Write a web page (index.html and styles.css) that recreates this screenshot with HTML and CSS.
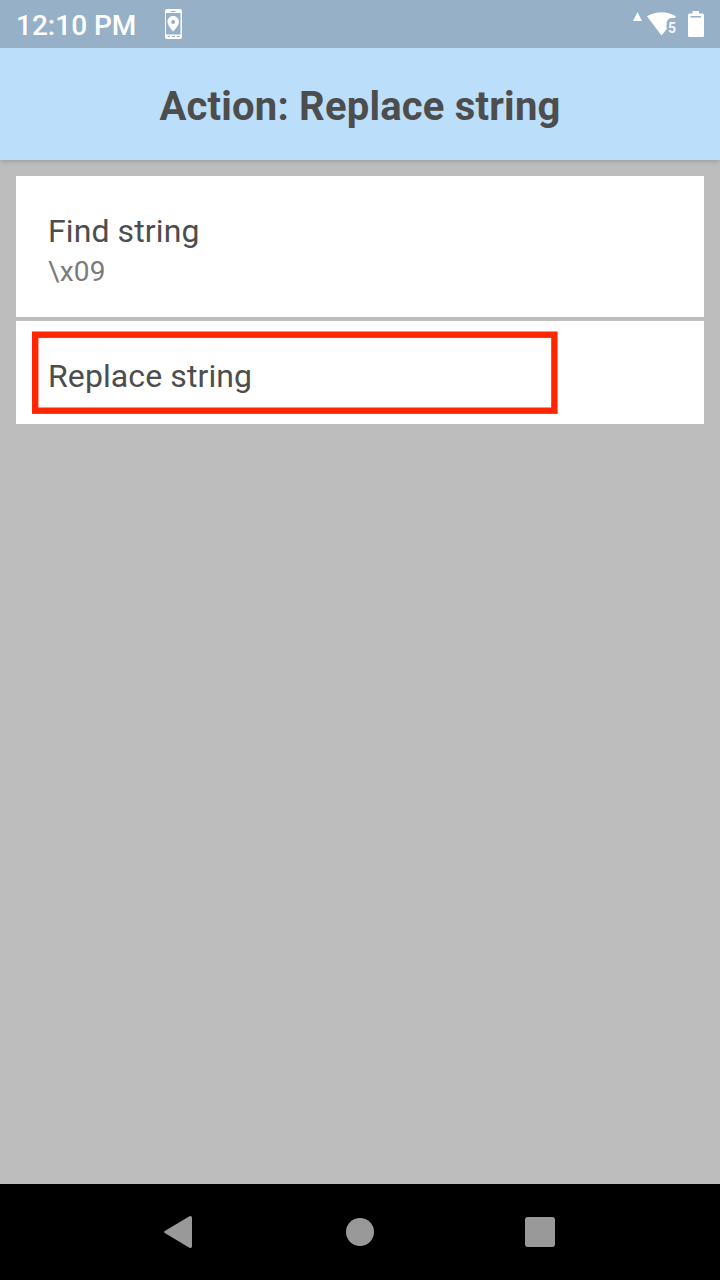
FILE: index.html
```html
<!DOCTYPE html>
<html lang="en">
<head>
<meta charset="utf-8">
<title>Action: Replace string</title>
<link rel="stylesheet" href="styles.css">
</head>
<body>
<div class="screen">
  <div class="status-bar">
    <span class="clock">12:10 PM</span>
    <svg class="phone-icon" width="18" height="30" viewBox="0 0 18 30">
      <path fill="#fff" fill-rule="evenodd" d="M2 0H15Q17 0 17 2V28Q17 30 15 30H2Q0 30 0 28V2Q0 0 2 0ZM1 4V25.500H15.500V4ZM6 2V3H10.500V2ZM2.500 27V28H5V27ZM7 27V28H10V27ZM12 27V28H14.500V27Z"/>
      <path fill="#fff" fill-rule="evenodd" d="M8.200 7C4.800 7 2.500 9.500 2.500 12.700C2.500 16.500 8.200 22.500 8.200 22.500S14 16.500 14 12.700C14 9.500 11.600 7 8.200 7ZM8.200 11.100A2 2 0 1 1 8.200 15.100A2 2 0 1 1 8.200 11.100Z"/>
    </svg>
    <span class="spacer"></span>
    <svg class="signal-icon" width="10" height="10" viewBox="0 0 10 10"><path fill="#fff" d="M4.500 0L9 9H0Z"/></svg>
    <span class="wifi">
      <svg width="30" height="24" viewBox="0 0 30 24"><path fill="#fff" d="M0 4.200Q14.500-3.800 29 4.200L28 6H24Q19.500 7 19.500 12V17.500L14.500 23.500Z"/></svg>
      <span class="wifi-label">5</span>
    </span>
    <svg class="battery-icon" width="16" height="26" viewBox="0 0 16 26">
      <path fill="#fff" fill-rule="evenodd" d="M4.500 0H11V2.500H14.500Q16 2.500 16 4V24.500Q16 26 14.500 26H1.500Q0 26 0 24.500V4Q0 2.500 1.500 2.500H4.500ZM2.500 5V6.500H13V5Z"/>
    </svg>
  </div>
  <header class="app-bar"><h1 class="title">Action: Replace string</h1></header>
  <main class="content">
    <div class="row">
      <div class="label">Find string</div>
      <div class="value">\x09</div>
    </div>
    <div class="row row-short">
      <div class="label">Replace string</div>
      <svg class="highlight" width="527" height="84" viewBox="0 0 527 84"><rect x="3.200" y="3.700" width="519.200" height="76" fill="none" stroke="#ff2600" stroke-width="6.400"/></svg>
    </div>
  </main>
  <nav class="nav-bar">
    <span class="nav-item"><svg width="32" height="32" viewBox="0 0 32 32"><path fill="#999" d="M0.800 15L25 0.500Q28 -1 28 2V30Q28 33 25 31.500L0.800 17Q-0.700 16 0.800 15Z"/></svg></span>
    <span class="nav-item"><svg width="32" height="32" viewBox="0 0 32 32"><circle cx="16" cy="16" r="14" fill="#999"/></svg></span>
    <span class="nav-item"><svg width="32" height="32" viewBox="0 0 32 32"><rect x="1" y="1" width="30" height="30" rx="3" fill="#999"/></svg></span>
  </nav>
</div>
</body>
</html>
```

FILE: styles.css
```css
* { box-sizing: border-box; }
body { margin: 0; font-family: Roboto, "Liberation Sans", sans-serif; }
.screen { width: 720px; height: 1280px; display: flex; flex-direction: column; background: #bdbdbd; overflow: hidden; }
.status-bar { position: relative; z-index: 1; height: 48px; flex: none; display: flex; align-items: flex-start; background: #95b0c7; color: #fff; padding: 0 16px; }
.clock { width: 149px; padding-top: 9px; font-size: 28px; line-height: 33px; font-weight: 500; white-space: nowrap; }
.phone-icon { margin-top: 9px; }
.spacer { flex: 1; }
.signal-icon { margin: 12px 4px 0 0; }
.wifi { position: relative; width: 30px; height: 24px; margin: 12px 11px 0 0; }
.wifi svg { display: block; }
.wifi-label { position: absolute; left: 21px; top: 8px; font-size: 14px; line-height: 16px; font-weight: 700; opacity: 0.9; }
.battery-icon { margin-top: 11px; }
.app-bar { position: relative; height: 112px; flex: none; display: flex; justify-content: center; padding-top: 35px; background: #bbdefb; box-shadow: 0 1px 5px rgba(0, 0, 0, 0.2); }
.title { margin: 0; color: #4d4d4d; font-size: 40px; line-height: 47px; font-weight: 700; letter-spacing: 0.2px; white-space: nowrap; }
.content { flex: 1; display: flex; flex-direction: column; gap: 4px; padding: 16px; }
.row { position: relative; height: 141px; padding: 36px 32px 0; background: #fff; }
.row-short { height: 103px; }
.label { color: #4d4d4d; font-size: 32px; line-height: 38px; letter-spacing: 0.1px; }
.value { margin-top: 5px; color: #7b7b7b; font-size: 28px; line-height: 33px; letter-spacing: 0.2px; }
.highlight { position: absolute; left: 16px; top: 10px; }
.nav-bar { height: 96px; flex: none; display: flex; justify-content: center; background: #000; }
.nav-item { width: 180px; display: flex; align-items: center; justify-content: center; }
```
